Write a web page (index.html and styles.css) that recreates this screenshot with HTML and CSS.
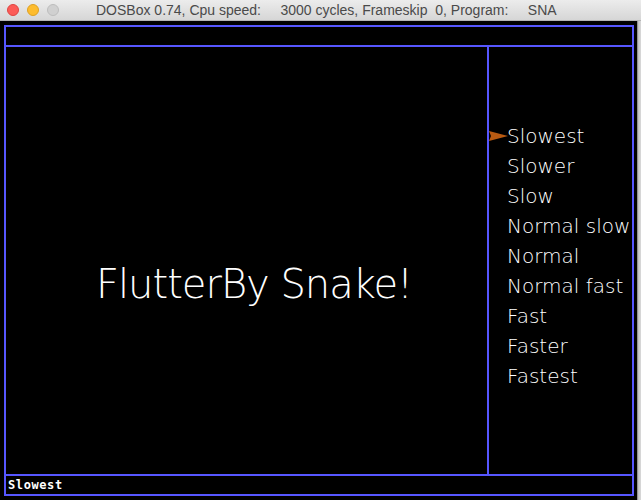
FILE: index.html
```html
<!DOCTYPE html>
<html>
<head>
<meta charset="utf-8">
<link rel="stylesheet" href="styles.css">
</head>
<body>
<div class="window">
  <div class="titlebar">
    <div class="lights">
      <span class="light red"></span>
      <span class="light yellow"></span>
      <span class="light grey"></span>
    </div>
    <div class="title">DOSBox 0.74, Cpu speed:&nbsp;&nbsp;&nbsp;&nbsp; 3000 cycles, Frameskip&nbsp; 0, Program:&nbsp;&nbsp;&nbsp;&nbsp; SNA</div>
  </div>
  <div class="body">
    <div class="screen">
      <div class="frame">
        <div class="topbar"></div>
        <div class="middle">
          <div class="stage"><span class="big">FlutterBy Snake!</span></div>
          <div class="menu">
            <div class="item selected">
              <svg class="pointer" width="19" height="11" viewBox="0 0 19 11"><polygon points="0,0 19,5 0,10 2,5" fill="#b85a12"/></svg>
              <span>Slowest</span>
            </div>
            <div class="item"><span>Slower</span></div>
            <div class="item"><span>Slow</span></div>
            <div class="item"><span>Normal slow</span></div>
            <div class="item"><span>Normal</span></div>
            <div class="item"><span>Normal fast</span></div>
            <div class="item"><span>Fast</span></div>
            <div class="item"><span>Faster</span></div>
            <div class="item"><span>Fastest</span></div>
          </div>
        </div>
        <div class="status">Slowest</div>
      </div>
    </div>
    <div class="edge"></div>
  </div>
</div>
</body>
</html>
```
FILE: styles.css
```css
html, body {
  margin: 0;
  padding: 0;
  width: 641px;
  height: 500px;
  overflow: hidden;
  background: #000;
}
.window {
  width: 641px;
  height: 500px;
  display: flex;
  flex-direction: column;
}
.titlebar {
  height: 21px;
  flex: none;
  display: flex;
  align-items: center;
  background: linear-gradient(#ececec, #d6d6d6);
  border-bottom: 1px solid #b4b4b4;
  box-sizing: border-box;
}
.lights {
  display: flex;
  gap: 8px;
  padding-left: 7px;
}
.light {
  width: 12px;
  height: 12px;
  border-radius: 50%;
  box-sizing: border-box;
}
.red { background: #fc5b57; border: 1px solid #de4542; }
.yellow { background: #fdbc2e; border: 1px solid #dea123; }
.grey { background: #d0d0d0; border: 1px solid #bdbdbd; }
.title {
  font-family: "Liberation Sans", Arial, sans-serif;
  font-size: 14px;
  color: #4a4a4a;
  padding-left: 37px;
  white-space: pre;
}
.body {
  flex: 1;
  display: flex;
}
.screen {
  width: 637px;
  background: #000;
  padding: 4px 3px 3px 4px;
  box-sizing: border-box;
}
.edge {
  flex: 1;
  background: linear-gradient(90deg, #7a7a7a, #c8c8c8 40%, #dadada);
}
.frame {
  height: 471px;
  width: 630px;
  border: 2px solid #5656ff;
  box-sizing: border-box;
  display: flex;
  flex-direction: column;
}
.topbar {
  height: 18px;
  flex: none;
  border-bottom: 2px solid #5656ff;
}
.middle {
  flex: 1;
  display: flex;
}
.stage {
  width: 483px;
  border-right: 2px solid #5656ff;
  box-sizing: border-box;
  padding: 214px 0 0 90px;
}
.big {
  font-family: "DejaVu Sans", sans-serif;
  font-weight: 200;
  font-size: 40px;
  letter-spacing: -1px;
  color: #fff;
  white-space: pre;
}
.menu {
  flex: 1;
  padding-top: 74px;
}
.item {
  height: 30px;
  display: flex;
  align-items: center;
  padding-left: 18px;
  position: relative;
  font-family: "DejaVu Sans", sans-serif;
  font-weight: 200;
  font-size: 20px;
  color: #fff;
  white-space: pre;
}
.pointer {
  position: absolute;
  left: 0;
  top: 10px;
}
.status {
  height: 18px;
  flex: none;
  border-top: 2px solid #5656ff;
  padding-left: 2px;
  font-family: "DejaVu Sans Mono", monospace;
  font-weight: bold;
  font-size: 12px;
  line-height: 18px;
  color: #fff;
  letter-spacing: 0.6px;
}
```
